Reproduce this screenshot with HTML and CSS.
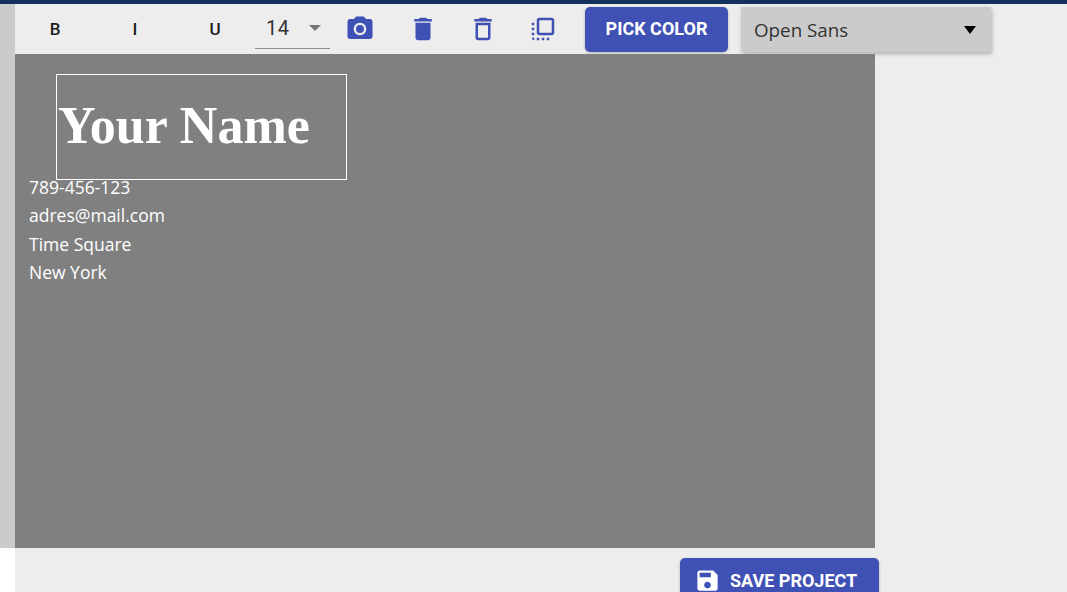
FILE: index.html
```html
<!DOCTYPE html>
<html>
<head>
    <title>Card Editor</title>
    <link rel="stylesheet" href="styles.css">
</head>
<body>
    <div class="top-line"></div>
    <div class="page">
        <div class="side-strip"></div>
        <div class="editor">
            <div class="toolbar">
                <button class="format-btn">B</button>
                <button class="format-btn">I</button>
                <button class="format-btn">U</button>
                <div class="size-select">
                    <span>14</span>
                    <span class="size-arrow"></span>
                </div>
                <button class="icon-btn">
                    <svg viewBox="0 0 24 24"><circle cx="12" cy="12" r="3.2"/><path d="M9 2L7.17 4H4c-1.1 0-2 .9-2 2v12c0 1.1.9 2 2 2h16c1.1 0 2-.9 2-2V6c0-1.1-.9-2-2-2h-3.17L15 2H9zm3 15c-2.76 0-5-2.24-5-5s2.24-5 5-5 5 2.24 5 5-2.24 5-5 5z"/></svg>
                </button>
                <button class="icon-btn delete-btn">
                    <svg viewBox="0 0 24 24"><path d="M6 19c0 1.1.9 2 2 2h8c1.1 0 2-.9 2-2V7H6v12zM19 4h-3.5l-1-1h-5l-1 1H5v2h14V4z"/></svg>
                </button>
                <button class="icon-btn">
                    <svg viewBox="0 0 24 24"><path d="M6 19c0 1.1.9 2 2 2h8c1.1 0 2-.9 2-2V7H6v12zM8 9h8v10H8V9zm7.5-5l-1-1h-5l-1 1H5v2h14V4z"/></svg>
                </button>
                <button class="icon-btn">
                    <svg viewBox="0 0 24 24"><path d="M3 13h2v-2H3v2zm0 4h2v-2H3v2zm2 4v-2H3c0 1.1.89 2 2 2zM3 9h2V7H3v2zm12 12h2v-2h-2v2zm4-18H9c-1.11 0-2 .9-2 2v10c0 1.1.89 2 2 2h10c1.1 0 2-.9 2-2V5c0-1.1-.9-2-2-2zm0 12H9V5h10v10zm-8 6h2v-2h-2v2zm-4 0h2v-2H7v2z"/></svg>
                </button>
                <button class="primary-btn pick-color">Pick color</button>
                <div class="font-select">
                    <span>Open Sans</span>
                    <span class="font-arrow"></span>
                </div>
            </div>
            <div class="canvas">
                <div class="name-box">Your Name</div>
                <div class="contact">
                    <div>789-456-123</div>
                    <div>adres@mail.com</div>
                    <div>Time Square</div>
                    <div>New York</div>
                </div>
            </div>
            <div class="footer">
                <button class="primary-btn save-btn">
                    <svg viewBox="0 0 24 24"><path d="M17 3H5c-1.11 0-2 .9-2 2v14c0 1.1.89 2 2 2h14c1.1 0 2-.9 2-2V7l-4-4zm-5 16c-1.66 0-3-1.34-3-3s1.34-3 3-3 3 1.34 3 3-1.34 3-3 3zm3-10H5V5h10v4z"/></svg>
                    Save project
                </button>
            </div>
        </div>
    </div>
</body>
</html>
```

FILE: styles.css
```css
html, body {
    height: 592px;
    margin: 0;
    overflow: hidden;
    background: #fff;
}
body {
    font-family: "Open Sans", sans-serif;
}
button {
    border: none;
    background: none;
    padding: 0;
    cursor: pointer;
}
.top-line {
    height: 4px;
    background: #13305c;
}
.page {
    display: flex;
    height: 588px;
    background: #fff;
}
.side-strip {
    width: 15px;
    height: 544px;
    background: #cbcbcb;
}
.editor {
    flex: 1;
    background: #ededed;
    overflow: hidden;
}
.toolbar {
    display: flex;
    align-items: flex-start;
    height: 50px;
}
.format-btn {
    width: 80px;
    height: 50px;
    padding-bottom: 1px;
    font-family: Roboto, sans-serif;
    font-size: 17px;
    font-weight: 500;
    color: #1c1c1c;
}
.size-select {
    display: flex;
    justify-content: space-between;
    align-items: center;
    box-sizing: border-box;
    width: 75px;
    height: 45px;
    padding: 4px 9px 0 11px;
    border-bottom: 1px solid #8e8e8e;
    font-family: Roboto, sans-serif;
    font-size: 20px;
    letter-spacing: 0.4px;
    color: #333;
}
.size-arrow {
    width: 0;
    height: 0;
    border-left: 6px solid transparent;
    border-right: 6px solid transparent;
    border-top: 6px solid #757575;
}
.icon-btn {
    width: 60px;
    height: 50px;
    display: flex;
    justify-content: center;
    align-items: center;
}
.icon-btn svg {
    width: 30px;
    height: 30px;
    fill: #3f51b5;
}
.delete-btn {
    margin-left: 3px;
}
.primary-btn {
    background: #3f51b5;
    color: #fff;
    border-radius: 5px;
    font-family: Roboto, sans-serif;
    font-size: 18px;
    font-weight: 700;
    text-transform: uppercase;
    box-shadow: 0 1px 3px rgba(0, 0, 0, 0.25);
}
.pick-color {
    width: 143px;
    height: 45px;
    margin: 3px 13px 0 12px;
    padding-bottom: 2px;
}
.font-select {
    display: flex;
    justify-content: space-between;
    align-items: center;
    box-sizing: border-box;
    width: 250px;
    height: 45px;
    margin-top: 3px;
    padding: 0 15px 0 13px;
    background: #cbcbcb;
    font-size: 18.8px;
    color: #333;
    box-shadow: 1px 2px 4px rgba(0, 0, 0, 0.25);
}
.font-arrow {
    width: 0;
    height: 0;
    border-left: 6.5px solid transparent;
    border-right: 6.5px solid transparent;
    border-top: 8px solid #000;
}
.canvas {
    position: relative;
    width: 860px;
    height: 494px;
    background: #808080;
    color: #fff;
}
.name-box {
    position: absolute;
    left: 41px;
    top: 20px;
    box-sizing: border-box;
    width: 291px;
    height: 106px;
    padding-left: 1px;
    border: 1px solid #fff;
    font-family: "Liberation Serif", serif;
    font-size: 52px;
    font-weight: 700;
    line-height: 102px;
    white-space: nowrap;
}
.contact {
    position: absolute;
    left: 14px;
    top: 119px;
    font-size: 17.5px;
    line-height: 28.4px;
}
.footer {
    padding: 10px 0 0 665px;
}
.save-btn {
    display: flex;
    align-items: center;
    width: 199px;
    height: 44px;
    padding-left: 14px;
    white-space: nowrap;
}
.save-btn svg {
    width: 27px;
    height: 27px;
    margin-right: 9px;
    fill: #fff;
}
```
